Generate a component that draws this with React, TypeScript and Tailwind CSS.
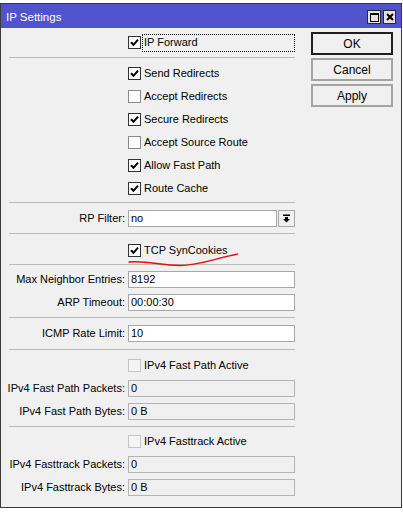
import React from "react";

type RowKind =
  | { t: "check"; label: string; on?: boolean; dim?: boolean; focus?: boolean }
  | { t: "input"; label: string; value: string; dim?: boolean }
  | { t: "select"; label: string; value: string };

function Check({ on, dim }: { on?: boolean; dim?: boolean }) {
  const cls = dim
    ? "border-[#c4c4c4] bg-[#f4f4f4]"
    : on
      ? "border-[#333333] bg-white"
      : "border-[#8c8c8c] bg-white";
  return (
    <span className={`flex h-[13px] w-[13px] shrink-0 items-center justify-center border ${cls}`}>
      {on && (
        <svg width="9" height="9" viewBox="0 0 9 9">
          <path d="M1 4.2 L3.5 6.8 L8 1.6" stroke="#000" strokeWidth="2" fill="none" />
        </svg>
      )}
    </span>
  );
}

function Row({ row }: { row: RowKind }) {
  if (row.t === "check") {
    return (
      <div className="flex h-[23px] items-center pl-[119px]">
        <Check on={row.on} dim={row.dim} />
        {row.focus ? (
          <span className="ml-[1px] flex h-[18px] flex-1 items-center border border-dotted border-black pl-[1px]">
            {row.label}
          </span>
        ) : (
          <span className="ml-[3px] whitespace-nowrap">{row.label}</span>
        )}
      </div>
    );
  }
  return (
    <div className="flex h-[23px] items-center">
      <span className="flex w-[116px] shrink-0 justify-end whitespace-nowrap">{row.label}:</span>
      <div className="ml-[3px] flex flex-1 items-center gap-[1px]">
        <div
          className={`flex h-[17px] flex-1 items-center border pl-[2px] ${
            row.t === "input" && row.dim
              ? "border-[#b4b4b4] bg-[#f0f0f0]"
              : "border-[#a8a8a8] bg-white"
          }`}
        >
          {row.value}
        </div>
        {row.t === "select" && (
          <div className="flex h-[17px] w-[17px] items-center justify-center border border-[#a8a8a8] bg-[#f0f0f0]">
            <svg width="9" height="9" viewBox="0 0 9 9">
              <rect x="1" y="0.5" width="7" height="1.5" fill="#000" />
              <path d="M3 3 H6 V5 H8 L4.5 8.5 L1 5 H3 Z" fill="#000" />
            </svg>
          </div>
        )}
      </div>
    </div>
  );
}

function Sep({ mt }: { mt: string }) {
  return <div className={`h-px bg-[#b9b9b9] ${mt}`} />;
}

export default function App() {
  return (
    <div className="h-[512px] w-[403px] overflow-hidden bg-white pt-[3px] font-['Liberation_Sans',Arial,sans-serif] text-[11px] text-black">
      <div className="relative flex h-[505px] w-[402px] flex-col border border-[#3a3a3a]">
        {/* title bar */}
        <div className="flex h-[24px] shrink-0 items-start justify-between bg-[#5053cc] pl-[5px] pr-[5px]">
          <span className="mt-[5px] text-[11.5px] text-white">IP Settings</span>
          <div className="mt-[6px] flex gap-[2px]">
            <div className="flex h-[14px] w-[14px] items-center justify-center border border-[#2a2a2a] bg-[#e2e2e2]">
              <div className="h-[9px] w-[9px] border border-t-2 border-black" />
            </div>
            <div className="flex h-[14px] w-[13px] items-center justify-center border border-[#2a2a2a] bg-[#e2e2e2]">
              <svg width="8" height="8" viewBox="0 0 8 8">
                <path d="M1 1 L7 7 M7 1 L1 7" stroke="#000" strokeWidth="2" />
              </svg>
            </div>
          </div>
        </div>

        {/* body */}
        <div className="flex flex-1 bg-[#f0f0f0]">
          <div className="ml-[8px] flex w-[286px] flex-col">
            <div className="mt-[3px]">
              <Row row={{ t: "check", label: "IP Forward", on: true, focus: true }} />
            </div>
            <Sep mt="mt-[3px]" />
            <div className="mt-[4px]">
              <Row row={{ t: "check", label: "Send Redirects", on: true }} />
              <Row row={{ t: "check", label: "Accept Redirects" }} />
              <Row row={{ t: "check", label: "Secure Redirects", on: true }} />
              <Row row={{ t: "check", label: "Accept Source Route" }} />
              <Row row={{ t: "check", label: "Allow Fast Path", on: true }} />
              <Row row={{ t: "check", label: "Route Cache", on: true }} />
            </div>
            <Sep mt="mt-[2px]" />
            <div className="mt-[4px]">
              <Row row={{ t: "select", label: "RP Filter", value: "no" }} />
            </div>
            <Sep mt="mt-[3px]" />
            <div className="mt-[5px]">
              <Row row={{ t: "check", label: "TCP SynCookies", on: true }} />
            </div>
            <Sep mt="mt-[2px]" />
            <div className="mt-[3px]">
              <Row row={{ t: "input", label: "Max Neighbor Entries", value: "8192" }} />
              <Row row={{ t: "input", label: "ARP Timeout", value: "00:00:30" }} />
            </div>
            <Sep mt="mt-[3px]" />
            <div className="mt-[4px]">
              <Row row={{ t: "input", label: "ICMP Rate Limit", value: "10" }} />
            </div>
            <Sep mt="mt-[4px]" />
            <div className="mt-[4px]">
              <Row row={{ t: "check", label: "IPv4 Fast Path Active", dim: true }} />
              <Row row={{ t: "input", label: "IPv4 Fast Path Packets", value: "0", dim: true }} />
              <Row row={{ t: "input", label: "IPv4 Fast Path Bytes", value: "0 B", dim: true }} />
            </div>
            <Sep mt="mt-[3px]" />
            <div className="mt-[3px]">
              <Row row={{ t: "check", label: "IPv4 Fasttrack Active", dim: true }} />
              <Row row={{ t: "input", label: "IPv4 Fasttrack Packets", value: "0", dim: true }} />
              <Row row={{ t: "input", label: "IPv4 Fasttrack Bytes", value: "0 B", dim: true }} />
            </div>
          </div>

          <div className="ml-[16px] mt-[4px] flex w-[82px] flex-col gap-[3px] text-[12px]">
            <button className="flex h-[23px] items-center justify-center border-2 border-[#1e1e1e] bg-[#f0f0f0]">OK</button>
            <button className="flex h-[23px] items-center justify-center border-2 border-[#a4a4a4] bg-[#f0f0f0]">Cancel</button>
            <button className="flex h-[23px] items-center justify-center border-2 border-[#a4a4a4] bg-[#f0f0f0]">Apply</button>
          </div>
        </div>

        {/* red hand-drawn underline */}
        <svg className="pointer-events-none absolute left-0 top-0" width="402" height="505" viewBox="1 4 402 505">
          <path
            d="M128.5 262 C 148 260.5, 160 265.5, 180 265.5 C 200 265.5, 216 258, 238 254"
            stroke="#e01010"
            strokeWidth="1.5"
            fill="none"
          />
        </svg>
      </div>
    </div>
  );
}
